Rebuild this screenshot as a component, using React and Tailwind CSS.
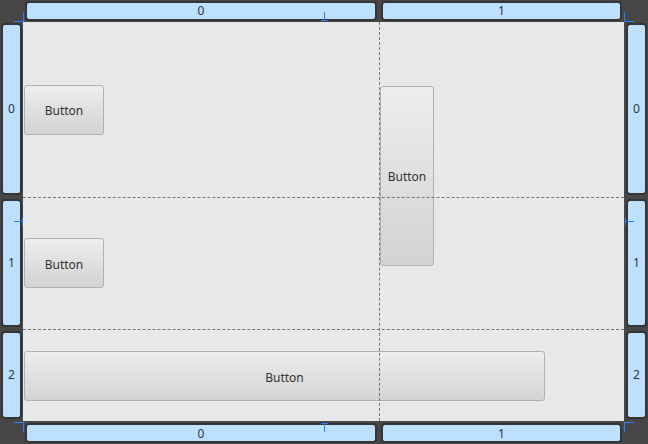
export default function App() {
  return (
    <div className="relative w-[648px] h-[444px] bg-[#474747] grid grid-cols-[23px_601px_24px] grid-rows-[22px_399px_23px] font-['Noto_Sans',sans-serif] overflow-hidden">
      {/* top headers */}
      <div />
      <div className="flex">
        <div className="w-[356px] px-[2px] pt-[1px]">
          <Bar text="0" className="h-[20px]" />
        </div>
        <div className="w-[245px] px-[2px] pt-[1px]">
          <Bar text="1" className="h-[20px]" />
        </div>
      </div>
      <div />

      {/* left headers */}
      <div className="flex flex-col">
        <div className="h-[175px] pl-[1px] pr-[1px] pt-[1px] pb-[2px]">
          <Bar text="0" className="h-full" />
        </div>
        <div className="h-[132px] pl-[1px] pr-[1px] pt-[2px] pb-[2px]">
          <Bar text="1" className="h-full" />
        </div>
        <div className="h-[92px] pl-[1px] pr-[1px] pt-[2px] pb-[2px]">
          <Bar text="2" className="h-full" />
        </div>
      </div>

      {/* content */}
      <div className="relative bg-[#e8e8e8] grid grid-cols-[356px_245px] grid-rows-[175px_132px_92px]">
        <Btn className="col-start-1 row-start-1 w-[80px] h-[50px]" />
        <Btn className="col-start-2 row-start-1 row-span-2 w-[54px] h-[180px]" />
        <Btn className="col-start-1 row-start-2 w-[80px] h-[50px]" />
        <Btn className="col-start-1 col-span-2 row-start-3 w-[521px] h-[50px] mt-[2px]" />

        <div className="absolute left-[356px] top-0 bottom-0 border-l border-dashed border-[#767676] pointer-events-none" />
        <div className="absolute top-[175px] left-0 right-0 border-t border-dashed border-[#767676] pointer-events-none" />
        <div className="absolute top-[307px] left-0 right-0 border-t border-dashed border-[#767676] pointer-events-none" />
      </div>

      {/* right headers */}
      <div className="flex flex-col">
        <div className="h-[175px] pl-[2px] pr-[1px] pt-[1px] pb-[2px]">
          <Bar text="0" className="h-full" />
        </div>
        <div className="h-[132px] pl-[2px] pr-[1px] pt-[2px] pb-[2px]">
          <Bar text="1" className="h-full" />
        </div>
        <div className="h-[92px] pl-[2px] pr-[1px] pt-[2px] pb-[2px]">
          <Bar text="2" className="h-full" />
        </div>
      </div>

      {/* bottom headers */}
      <div />
      <div className="flex">
        <div className="w-[356px] px-[2px] pt-[2px]">
          <Bar text="0" className="h-[20px] pt-[2px]" />
        </div>
        <div className="w-[245px] px-[2px] pt-[2px]">
          <Bar text="1" className="h-[20px] pt-[2px]" />
        </div>
      </div>
      <div />

      {/* blue alignment ticks */}
      <Tick className="left-[23px] top-[12px] w-[1px] h-[10px]" />
      <Tick className="left-[14px] top-[21px] w-[10px] h-[1px]" />
      <Tick className="left-[624px] top-[12px] w-[1px] h-[10px]" />
      <Tick className="left-[624px] top-[21px] w-[10px] h-[1px]" />
      <Tick className="left-[23px] top-[422px] w-[1px] h-[10px]" />
      <Tick className="left-[14px] top-[422px] w-[10px] h-[1px]" />
      <Tick className="left-[624px] top-[422px] w-[1px] h-[10px]" />
      <Tick className="left-[624px] top-[422px] w-[10px] h-[1px]" />

      <Tick className="left-[324px] top-[12px] w-[1px] h-[9px]" />
      <Tick className="left-[321px] top-[20px] w-[7px] h-[1px]" />
      <Tick className="left-[324px] top-[423px] w-[1px] h-[9px]" />
      <Tick className="left-[321px] top-[423px] w-[7px] h-[1px]" />

      <Tick className="left-[14px] top-[221px] w-[9px] h-[1px]" />
      <Tick className="left-[22px] top-[218px] w-[1px] h-[7px]" />
      <Tick className="left-[625px] top-[221px] w-[9px] h-[1px]" />
      <Tick className="left-[625px] top-[218px] w-[1px] h-[7px]" />
    </div>
  )
}

function Bar({ text, className }) {
  return (
    <div className={`flex items-center justify-center rounded-[4px] border-2 border-[#353535] bg-[#bde0ff] text-[12px] leading-none text-[#2a3644] ${className}`}>
      {text}
    </div>
  )
}

function Btn({ className }) {
  return (
    <div className={`self-center justify-self-start ml-[1px] pt-[3px] flex items-center justify-center rounded-[3px] border border-[#b0b0b0] bg-linear-to-b from-[#ededed] to-[#d3d3d3] text-[12px] text-[#333333] ${className}`}>
      Button
    </div>
  )
}

function Tick({ className }) {
  return <div className={`absolute bg-[#2a7fff] pointer-events-none ${className}`} />
}
